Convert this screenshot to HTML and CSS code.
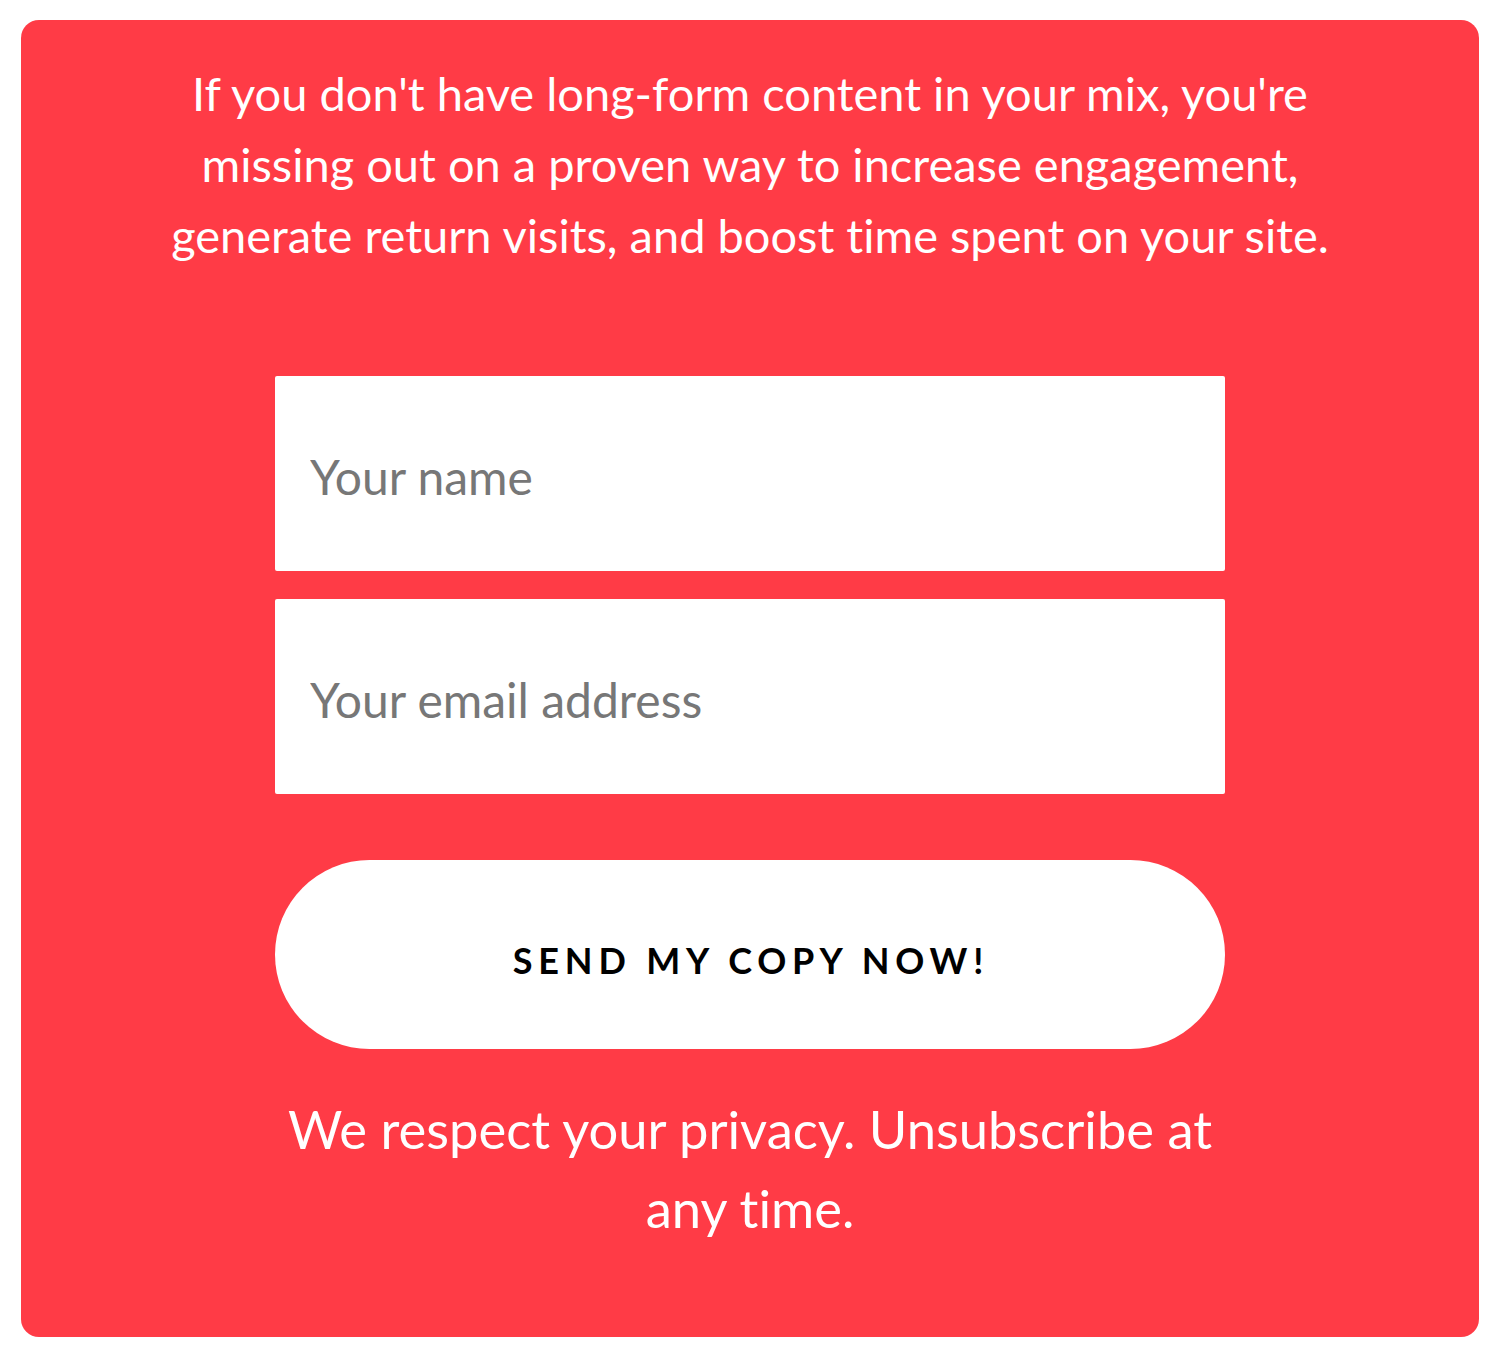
FILE: index.html
```html
<!DOCTYPE html>
<html lang="en">
<head>
<meta charset="utf-8">
<title>Signup</title>
<link rel="stylesheet" href="styles.css">
</head>
<body>
<div class="card">
  <p class="intro">If you don't have long-form content in your mix, you're missing out on a proven way to increase engagement, generate return visits, and boost time spent on your site.</p>
  <form class="form">
    <input class="field" type="text" placeholder="Your name">
    <input class="field" type="email" placeholder="Your email address">
    <button class="btn" type="button">SEND MY COPY NOW!</button>
  </form>
  <p class="privacy">We respect your privacy. Unsubscribe at any time.</p>
</div>
</body>
</html>
```

FILE: styles.css
```css
html, body {
  margin: 0;
  padding: 0;
  background: #ffffff;
}
body {
  padding: 20px 21px;
  font-family: Lato, "Liberation Sans", sans-serif;
  font-variant-ligatures: none;
}
.card {
  background: #ff3b46;
  border-radius: 18px;
  height: 1317px;
  box-sizing: border-box;
  padding: 38px 0 0;
  display: flex;
  flex-direction: column;
  align-items: center;
}
.intro {
  margin: 0;
  width: 1200px;
  color: #ffffff;
  font-size: 47px;
  line-height: 71px;
  text-align: center;
}
.form {
  margin-top: 105px;
  width: 950px;
  display: flex;
  flex-direction: column;
}
.field {
  height: 195px;
  border: 0;
  border-radius: 2px;
  background: #ffffff;
  padding: 6px 35px 0;
  font-family: Lato, "Liberation Sans", sans-serif;
  font-variant-ligatures: none;
  font-size: 48px;
  color: #333;
  outline: none;
  box-sizing: border-box;
}
.field + .field {
  margin-top: 28px;
}
.field::placeholder {
  color: #777777;
}
.btn {
  margin-top: 66px;
  height: 189px;
  border: 0;
  border-radius: 95px;
  background: #ffffff;
  color: #000000;
  font-family: Lato, "Liberation Sans", sans-serif;
  font-weight: 700;
  font-size: 36px;
  letter-spacing: 5.8px;
  padding: 10px 0 0 2px;
  cursor: pointer;
}
.privacy {
  margin: 40px 0 0;
  width: 960px;
  color: #ffffff;
  font-size: 52.5px;
  line-height: 79px;
  text-align: center;
}
```
